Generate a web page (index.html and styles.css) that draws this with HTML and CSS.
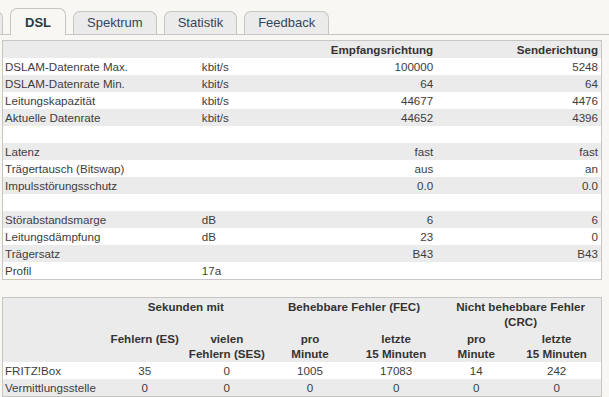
FILE: index.html
```html
<!DOCTYPE html>
<html lang="de">
<head>
    <meta charset="UTF-8">
    <title>DSL-Informationen</title>
    <link rel="stylesheet" href="styles.css">
</head>
<body>
    <div class="tabs">
        <div class="tab tab-cut"></div>
        <div class="tab active">DSL</div>
        <div class="tab">Spektrum</div>
        <div class="tab">Statistik</div>
        <div class="tab">Feedback</div>
    </div>

    <div class="content">
        <table class="grid overview">
            <colgroup>
                <col class="c-label">
                <col class="c-unit">
                <col class="c-down">
                <col class="c-up">
            </colgroup>
            <tr class="head">
                <th></th>
                <th></th>
                <th class="num">Empfangsrichtung</th>
                <th class="num">Senderichtung</th>
            </tr>
            <tr><td>DSLAM-Datenrate Max.</td><td>kbit/s</td><td class="num">100000</td><td class="num">5248</td></tr>
            <tr class="odd"><td>DSLAM-Datenrate Min.</td><td>kbit/s</td><td class="num">64</td><td class="num">64</td></tr>
            <tr><td>Leitungskapazität</td><td>kbit/s</td><td class="num">44677</td><td class="num">4476</td></tr>
            <tr class="odd"><td>Aktuelle Datenrate</td><td>kbit/s</td><td class="num">44652</td><td class="num">4396</td></tr>
            <tr><td>&nbsp;</td><td></td><td></td><td></td></tr>
            <tr class="odd"><td>Latenz</td><td></td><td class="num">fast</td><td class="num">fast</td></tr>
            <tr><td>Trägertausch (Bitswap)</td><td></td><td class="num">aus</td><td class="num">an</td></tr>
            <tr class="odd"><td>Impulsstörungsschutz</td><td></td><td class="num">0.0</td><td class="num">0.0</td></tr>
            <tr><td>&nbsp;</td><td></td><td></td><td></td></tr>
            <tr class="odd"><td>Störabstandsmarge</td><td>dB</td><td class="num">6</td><td class="num">6</td></tr>
            <tr><td>Leitungsdämpfung</td><td>dB</td><td class="num">23</td><td class="num">0</td></tr>
            <tr class="odd"><td>Trägersatz</td><td></td><td class="num">B43</td><td class="num">B43</td></tr>
            <tr><td>Profil</td><td>17a</td><td></td><td></td></tr>
        </table>

        <table class="grid errors">
            <colgroup>
                <col class="e-label">
                <col class="e-es">
                <col class="e-ses">
                <col class="e-fec1">
                <col class="e-fec2">
                <col class="e-crc1">
                <col class="e-crc2">
            </colgroup>
            <tr class="head">
                <th rowspan="2"></th>
                <th colspan="2">Sekunden mit</th>
                <th colspan="2">Behebbare Fehler (FEC)</th>
                <th colspan="2">Nicht behebbare Fehler (CRC)</th>
            </tr>
            <tr class="head">
                <th>Fehlern (ES)</th>
                <th>vielen<br>Fehlern (SES)</th>
                <th>pro<br>Minute</th>
                <th>letzte<br>15 Minuten</th>
                <th>pro<br>Minute</th>
                <th>letzte<br>15 Minuten</th>
            </tr>
            <tr>
                <td>FRITZ!Box</td>
                <td class="mid">35</td><td class="mid">0</td><td class="mid">1005</td>
                <td class="mid">17083</td><td class="mid">14</td><td class="mid">242</td>
            </tr>
            <tr class="odd">
                <td>Vermittlungsstelle</td>
                <td class="mid">0</td><td class="mid">0</td><td class="mid">0</td>
                <td class="mid">0</td><td class="mid">0</td><td class="mid">0</td>
            </tr>
        </table>
    </div>
</body>
</html>
```

FILE: styles.css
```css
body {
    margin: 0;
    padding: 0;
    background-color: #f8f7f3;
    font-family: "Liberation Sans", Arial, sans-serif;
    color: #3d3d3d;
    overflow: hidden;
}

/* tab row */
.tabs {
    display: flex;
    align-items: flex-end;
    gap: 7px;
    padding: 8px 0 0 10px;
    border-bottom: 1px solid #c6c6c2;
    height: 26px;
}
.tab {
    height: 22px;
    line-height: 22px;
    padding: 0 13px;
    font-size: 13px;
    color: #34465a;
    background-color: #ebebeb;
    border: 1px solid #c6c6c2;
    border-bottom: none;
    border-radius: 7px 7px 0 0;
}
.tab-cut {
    width: 20px;
    padding: 0;
    margin-left: -29px;
}
.tab.active {
    height: 26px;
    line-height: 27px;
    margin-bottom: -1px;
    padding: 0 14px;
    font-weight: bold;
    color: #2b3947;
    background-color: #f8f7f3;
}

/* tables */
.content {
    padding: 5px 0 0 2px;
}
.grid {
    width: 600px;
    table-layout: fixed;
    border-collapse: collapse;
    border: 1px solid #c6c6c2;
    background-color: #ffffff;
    font-size: 11.6px;
}
.grid td, .grid th {
    padding: 1px 2px;
    line-height: 15px;
    white-space: nowrap;
    overflow: hidden;
}
.grid tr.head {
    background-color: #ebebeb;
}
.grid th {
    font-weight: bold;
    color: #333;
}
.grid tr.odd {
    background-color: #ebebeb;
}
.grid .num {
    text-align: right;
    padding-right: 3px;
}

.c-label { width: 197px; }
.c-unit { width: 100px; }
.c-down { width: 136px; }
.c-up { width: 165px; }

.errors {
    margin-top: 17px;
}
.errors th {
    text-align: center;
    vertical-align: top;
    padding: 1px 0;
    white-space: normal;
}
.errors td.mid {
    text-align: center;
}
.e-label { width: 101px; }
.e-es { width: 82px; }
.e-ses { width: 82px; }
.e-fec1 { width: 84px; }
.e-fec2 { width: 88px; }
.e-crc1 { width: 72px; }
.e-crc2 { width: 89px; }
```
